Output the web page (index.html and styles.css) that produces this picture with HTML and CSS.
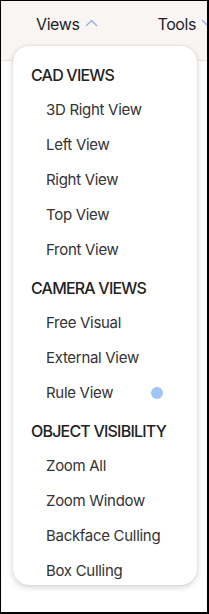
FILE: index.html
```html
<!DOCTYPE html>
<html>
<head>
<meta charset="utf-8">
<link rel="stylesheet" href="styles.css">
</head>
<body>
<div class="frame">
  <header class="topbar">
    <div class="nav-item">Views <svg class="chev" width="13" height="8" viewBox="0 0 13 8"><path d="M1 7 L6.5 1.5 L12 7" fill="none" stroke="#8fa6f0" stroke-width="1.2"/></svg></div>
    <div class="nav-item tools">Tools <svg class="chev" width="13" height="8" viewBox="0 0 13 8"><path d="M1 1 L6.5 6.5 L12 1" fill="none" stroke="#8fa6f0" stroke-width="1.2"/></svg></div>
  </header>
  <div class="menu">
    <div class="group">CAD VIEWS</div>
    <div class="item">3D Right View</div>
    <div class="item">Left View</div>
    <div class="item">Right View</div>
    <div class="item">Top View</div>
    <div class="item">Front View</div>
    <div class="group">CAMERA VIEWS</div>
    <div class="item">Free Visual</div>
    <div class="item">External View</div>
    <div class="item">Rule View <span class="dot"></span></div>
    <div class="group">OBJECT VISIBILITY</div>
    <div class="item">Zoom All</div>
    <div class="item">Zoom Window</div>
    <div class="item">Backface Culling</div>
    <div class="item">Box Culling</div>
  </div>
</div>
</body>
</html>
```
FILE: styles.css
```css
html, body {
  margin: 0;
  padding: 0;
}
body {
  width: 209px;
  height: 614px;
  overflow: hidden;
  font-family: Inter, "Liberation Sans", sans-serif;
}
.frame {
  box-sizing: border-box;
  width: 209px;
  height: 614px;
  border: 1px solid #000;
  border-right-width: 2px;
  border-bottom-width: 2px;
  background: #fff;
  position: relative;
  overflow: hidden;
}
.topbar {
  height: 60px;
  background: #f9f5f2;
  border-bottom: 1px solid #efe3df;
  display: flex;
  align-items: flex-start;
  padding: 13px 0 0 35px;
  box-sizing: border-box;
  white-space: nowrap;
}
.nav-item {
  font-size: 16px;
  color: #1e1e2a;
  letter-spacing: -0.4px;
  display: flex;
  align-items: center;
  gap: 5px;
}
.nav-item .chev {
  margin-top: -3px;
}
.tools {
  margin-left: 60px;
}
.menu {
  position: absolute;
  left: 12px;
  top: 45px;
  width: 184px;
  height: 539px;
  box-sizing: border-box;
  background: #fff;
  border-radius: 16px;
  box-shadow: 0 2px 6px rgba(0,0,0,0.18), 0 0 2px rgba(0,0,0,0.08);
  padding: 8px 0 0 0;
}
.group {
  height: 34px;
  line-height: 34px;
  padding: 4px 0 0 18px;
  font-size: 16px;
  font-weight: 500;
  color: #222;
  letter-spacing: -0.8px;
  white-space: nowrap;
}
.item {
  height: 35px;
  line-height: 35px;
  padding: 0 34px 0 33px;
  font-size: 15px;
  color: #333;
  letter-spacing: -0.3px;
  display: flex;
  align-items: center;
  white-space: nowrap;
}
.item:nth-child(n+12) {
  margin-top: 0;
}
.dot {
  width: 12px;
  height: 12px;
  border-radius: 50%;
  background: #9ec5f5;
  margin-left: auto;
}
```
